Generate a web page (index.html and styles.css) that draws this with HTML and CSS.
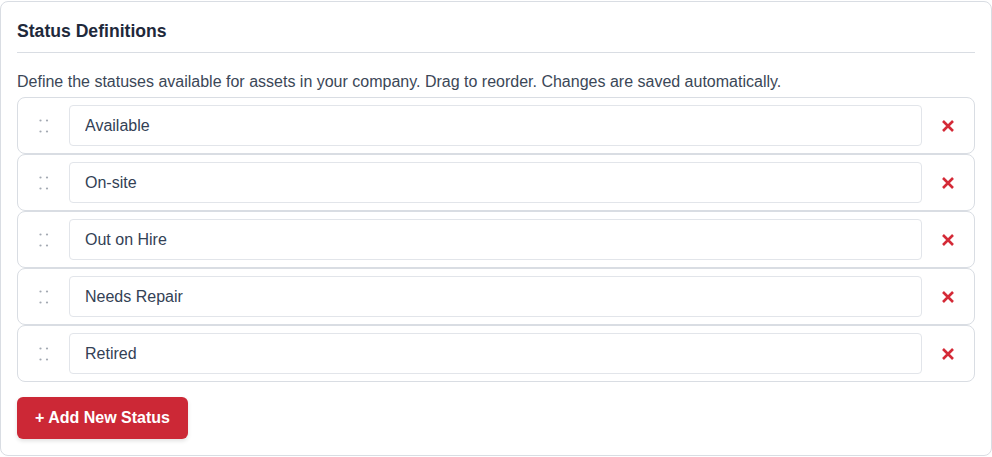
FILE: index.html
```html
<!DOCTYPE html>
<html lang="en">

<head>
    <meta charset="UTF-8">
    <meta name="viewport" content="width=device-width, initial-scale=1.0">
    <title>Status Definitions</title>
    <link rel="stylesheet" href="styles.css">
</head>

<body>
    <div class="card">
        <h2 class="card-title">Status Definitions</h2>
        <p class="card-help">Define the statuses available for assets in your company. Drag to reorder. Changes are saved automatically.</p>

        <div class="status-list" id="statusList">
            <div class="status-row">
                <span class="drag-handle"><svg width="10" height="14" viewBox="0 0 10 14"><circle cx="1.5" cy="1.5" r="1.1"/><circle cx="8" cy="1.5" r="1.1"/><circle cx="1.5" cy="12.5" r="1.1"/><circle cx="8" cy="12.5" r="1.1"/></svg></span>
                <input type="text" class="status-input" value="Available">
                <button class="remove-button" title="Remove"><svg width="14" height="14" viewBox="0 0 14 14"><path d="M2 2 L12 12 M12 2 L2 12"/></svg></button>
            </div>
            <div class="status-row">
                <span class="drag-handle"><svg width="10" height="14" viewBox="0 0 10 14"><circle cx="1.5" cy="1.5" r="1.1"/><circle cx="8" cy="1.5" r="1.1"/><circle cx="1.5" cy="12.5" r="1.1"/><circle cx="8" cy="12.5" r="1.1"/></svg></span>
                <input type="text" class="status-input" value="On-site">
                <button class="remove-button" title="Remove"><svg width="14" height="14" viewBox="0 0 14 14"><path d="M2 2 L12 12 M12 2 L2 12"/></svg></button>
            </div>
            <div class="status-row">
                <span class="drag-handle"><svg width="10" height="14" viewBox="0 0 10 14"><circle cx="1.5" cy="1.5" r="1.1"/><circle cx="8" cy="1.5" r="1.1"/><circle cx="1.5" cy="12.5" r="1.1"/><circle cx="8" cy="12.5" r="1.1"/></svg></span>
                <input type="text" class="status-input" value="Out on Hire">
                <button class="remove-button" title="Remove"><svg width="14" height="14" viewBox="0 0 14 14"><path d="M2 2 L12 12 M12 2 L2 12"/></svg></button>
            </div>
            <div class="status-row">
                <span class="drag-handle"><svg width="10" height="14" viewBox="0 0 10 14"><circle cx="1.5" cy="1.5" r="1.1"/><circle cx="8" cy="1.5" r="1.1"/><circle cx="1.5" cy="12.5" r="1.1"/><circle cx="8" cy="12.5" r="1.1"/></svg></span>
                <input type="text" class="status-input" value="Needs Repair">
                <button class="remove-button" title="Remove"><svg width="14" height="14" viewBox="0 0 14 14"><path d="M2 2 L12 12 M12 2 L2 12"/></svg></button>
            </div>
            <div class="status-row">
                <span class="drag-handle"><svg width="10" height="14" viewBox="0 0 10 14"><circle cx="1.5" cy="1.5" r="1.1"/><circle cx="8" cy="1.5" r="1.1"/><circle cx="1.5" cy="12.5" r="1.1"/><circle cx="8" cy="12.5" r="1.1"/></svg></span>
                <input type="text" class="status-input" value="Retired">
                <button class="remove-button" title="Remove"><svg width="14" height="14" viewBox="0 0 14 14"><path d="M2 2 L12 12 M12 2 L2 12"/></svg></button>
            </div>
        </div>

        <button class="add-button">+ Add New Status</button>
    </div>
</body>

</html>
```

FILE: styles.css
```css
body {
    font-family: "Liberation Sans", Arial, sans-serif;
    margin: 0;
    padding: 1px 0 0 0;
    background-color: #ffffff;
}

.card {
    padding: 16px;
    background-color: white;
    border: 1px solid #d9dde3;
    border-radius: 8px;
}

.card-title {
    margin: 0;
    padding-bottom: 7px;
    font-size: 17.6px;
    line-height: 27px;
    font-weight: bold;
    color: #1e293b;
    border-bottom: 1px solid #d9dde3;
}

.card-help {
    margin: 17px 0 3px;
    font-size: 16px;
    line-height: 24px;
    color: #3b4757;
}

.status-row {
    display: flex;
    align-items: center;
    gap: 12px;
    padding: 7px 12px;
    border: 1px solid #d9dde3;
    border-radius: 8px;
    background-color: white;
}

.drag-handle {
    width: 27px;
    display: flex;
    justify-content: center;
    cursor: grab;
}

.drag-handle svg {
    fill: #a3a9b2;
}

.status-input {
    flex: 1;
    height: 41px;
    box-sizing: border-box;
    padding: 0 15px;
    font-family: inherit;
    font-size: 16px;
    color: #334155;
    border: 1px solid #e2e5ea;
    border-radius: 4px;
}

.remove-button {
    width: 28px;
    height: 26px;
    padding: 0;
    border: none;
    background: none;
    display: flex;
    align-items: center;
    justify-content: center;
    cursor: pointer;
}

.remove-button svg {
    stroke: #d42a37;
    stroke-width: 2.6;
    fill: none;
}

.add-button {
    margin-top: 15px;
    padding: 9px 18px;
    font-family: inherit;
    font-size: 16px;
    line-height: 24px;
    font-weight: bold;
    color: white;
    background-color: #cc2836;
    border: none;
    border-radius: 6px;
    box-shadow: 0 2px 4px rgba(0, 0, 0, 0.12);
    cursor: pointer;
}
```
